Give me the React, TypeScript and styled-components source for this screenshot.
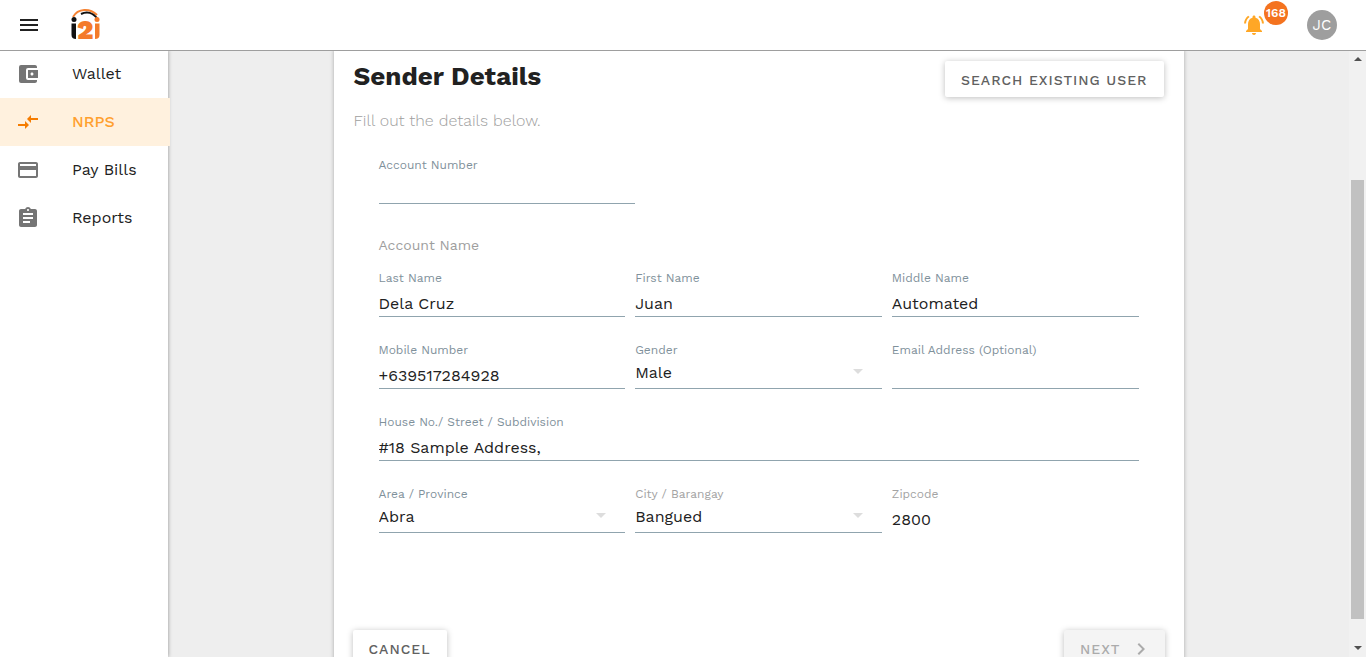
import React from "react";
import styled, { createGlobalStyle, css } from "styled-components";
import {
  MdAccountBalanceWallet,
  MdAssignment,
  MdChevronRight,
  MdCompareArrows,
  MdMenu,
  MdNotificationsActive,
  MdPayment,
} from "react-icons/md";

const GlobalStyle = createGlobalStyle`
  *, *::before, *::after { box-sizing: border-box; }
  body {
    margin: 0;
    background: #eeeeee;
    color: #212121;
    font-family: "Work Sans", Inter, "Liberation Sans", sans-serif;
    font-size: 16px;
  }
  button, input, select { font: inherit; color: inherit; letter-spacing: inherit; }
`;

const Shell = styled.div`
  display: flex;
  flex-direction: column;
  height: 100vh;
`;

const TopBar = styled.header`
  position: relative;
  z-index: 2;
  flex: none;
  display: flex;
  align-items: center;
  height: 50px;
  padding: 0 29px 0 17px;
  background: #ffffff;
  box-shadow: 0 1px 0 #9e9e9e;
`;

const IconButton = styled.button`
  position: relative;
  display: flex;
  padding: 0;
  border: 0;
  background: none;
  font-size: 24px;
  cursor: pointer;
`;

const LogoLink = styled.a`
  display: flex;
  margin: 0 auto 0 29px;
`;

const AlertButton = styled(IconButton)`
  margin-right: 41px;
  color: #ffa726;
`;

const Badge = styled.span`
  position: absolute;
  top: -12px;
  left: 22px;
  width: 24px;
  height: 24px;
  border-radius: 50%;
  background: #f4731f;
  color: #ffffff;
  font-size: 12px;
  font-weight: 600;
  line-height: 25px;
  text-align: center;
`;

const Avatar = styled.button`
  width: 30px;
  height: 30px;
  padding: 0;
  border: 0;
  border-radius: 50%;
  background: #9e9e9e;
  color: #ffffff;
  font-size: 15px;
`;

const Body = styled.div`
  flex: 1;
  display: flex;
  min-height: 0;
`;

const Sidebar = styled.nav`
  position: relative;
  z-index: 1;
  flex: none;
  width: 168px;
  background: #ffffff;
  box-shadow: 0 0 4px rgba(0, 0, 0, 0.4);
`;

const NavItem = styled.a<{ $active?: boolean }>`
  display: flex;
  align-items: center;
  gap: 32px;
  height: 48px;
  margin-right: -2px;
  padding-left: 16px;
  color: #212121;
  line-height: 20px;
  text-decoration: none;

  svg {
    color: #757575;
    font-size: 24px;
  }

  ${({ $active }) =>
    $active &&
    css`
      background: #fff1de;
      color: #ffa02e;
      font-weight: 500;
      svg {
        color: #f57c00;
      }
    `}
`;

const Main = styled.main`
  flex: 1;
  min-width: 0;
  overflow-y: auto;
  scrollbar-width: none;
`;

const Card = styled.section`
  max-width: 850px;
  margin: 0 auto;
  padding: 11px 20px 20px;
  background: #ffffff;
  box-shadow: 0 0 4px rgba(0, 0, 0, 0.3);
`;

const CardHead = styled.div`
  display: flex;
  justify-content: space-between;
  align-items: flex-start;
`;

const Title = styled.h1`
  margin: 0;
  font-size: 26px;
  font-weight: 700;
  line-height: 30px;
`;

const Subtitle = styled.p`
  margin: 14px 0 26px;
  color: #9e9e9e;
  font-weight: 300;
  line-height: 20px;
`;

const Action = styled.button`
  display: flex;
  align-items: center;
  gap: 8px;
  height: 36px;
  padding: 2px 16px 0;
  border: 0;
  border-radius: 2px;
  background: #ffffff;
  box-shadow: 0 1px 6px rgba(0, 0, 0, 0.26);
  color: #616161;
  font-size: 14px;
  font-weight: 500;
  letter-spacing: 1px;
  text-transform: uppercase;
  cursor: pointer;

  svg {
    margin-right: -4px;
    font-size: 24px;
  }

  &:disabled {
    background: #f4f4f4;
    color: #ababab;
    cursor: default;
  }
`;

const Form = styled.form`
  padding: 0 25px;
`;

const Legend = styled.h2`
  margin: 31px 0 15px;
  color: #9e9e9e;
  font-size: 14px;
  font-weight: 400;
  line-height: 20px;
`;

const FieldGrid = styled.div`
  display: grid;
  grid-template-columns: repeat(3, 1fr);
  gap: 25px 10px;
`;

const Field = styled.div<{ $wide?: boolean }>`
  position: relative;
  grid-column: ${({ $wide }) => ($wide ? "1 / -1" : "auto")};
`;

const AccountField = styled(Field)`
  max-width: 256px;
`;

const Label = styled.label<{ $muted?: boolean }>`
  display: block;
  color: ${({ $muted }) => ($muted ? "#a3a3a3" : "#7f919b")};
  font-size: 12px;
  line-height: 16px;
`;

const control = css`
  display: block;
  width: 100%;
  height: 31px;
  border: 0;
  border-bottom: 1px solid #90a4ae;
  border-radius: 0;
  outline: 0;
  background: transparent;
`;

const Input = styled.input`
  ${control}
  padding: 5px 0 0;

  &:read-only {
    border-color: transparent;
  }
`;

const Select = styled.select`
  ${control}
  padding: 0 34px 2px 0;
  appearance: none;
`;

const Caret = styled.svg`
  position: absolute;
  right: 19px;
  bottom: 15px;
  fill: #dddddd;
  pointer-events: none;
`;

const Footer = styled.footer`
  display: flex;
  justify-content: space-between;
  margin: 97px -1px 0;
`;

const ScrollBar = styled.div`
  flex: none;
  display: flex;
  flex-direction: column;
  align-items: center;
  width: 17px;
  padding: 6px 0;
  background: #f1f1f1;

  svg {
    fill: #505050;
  }
`;

const Track = styled.div`
  flex: 1;
  width: 13px;
  margin: 6px 0;
  display: grid;
  grid-template-rows: 113fr 439fr 21fr;
`;

const Thumb = styled.div`
  grid-row: 2;
  background: #c1c1c1;
`;

function Logo() {
  return (
    <svg width="32" height="44" viewBox="0 -7 32 44" role="img" aria-label="i2i">
      <path d="M3 7C8 -2 20 -2 27 5" fill="none" stroke="#f58232" strokeWidth="2" />
      <path d="M11 4C17 1 23 3 27 8" fill="none" stroke="#111" strokeWidth="2" />
      <circle cx="4" cy="9.500" r="2.500" fill="#111" />
      <path d="M1.500 13.500H6V29Q1.500 29 1.500 25Z" fill="#111" />
      <text x="7" y="29" fontSize="27" fontWeight="900" fill="#f47b2a">2</text>
      <circle cx="27" cy="9.500" r="2.500" fill="#f47b2a" />
      <path d="M25 13.500H29.500V25Q29.500 29 25 29Z" fill="#f47b2a" />
    </svg>
  );
}

type FieldProps = { id: string; label: string; value?: string; wide?: boolean; muted?: boolean; readOnly?: boolean };

function TextField({ id, label, value = "", wide, muted, readOnly }: FieldProps) {
  return (
    <Field $wide={wide}>
      <Label htmlFor={id} $muted={muted}>{label}</Label>
      <Input id={id} defaultValue={value} readOnly={readOnly} />
    </Field>
  );
}

function SelectField({ id, label, options, muted }: { id: string; label: string; options: string[]; muted?: boolean }) {
  return (
    <Field>
      <Label htmlFor={id} $muted={muted}>{label}</Label>
      <Select id={id}>
        {options.map((option) => <option key={option}>{option}</option>)}
      </Select>
      <Caret width="10" height="5" viewBox="0 0 10 5"><path d="M0 0h10L5 5z" /></Caret>
    </Field>
  );
}

const navItems = [
  { label: "Wallet", icon: <MdAccountBalanceWallet /> },
  { label: "NRPS", icon: <MdCompareArrows />, active: true },
  { label: "Pay Bills", icon: <MdPayment /> },
  { label: "Reports", icon: <MdAssignment /> },
];

export default function App() {
  return (
    <Shell>
      <GlobalStyle />
      <TopBar>
        <IconButton aria-label="Menu"><MdMenu /></IconButton>
        <LogoLink href="#"><Logo /></LogoLink>
        <AlertButton aria-label="Notifications">
          <MdNotificationsActive />
          <Badge>168</Badge>
        </AlertButton>
        <Avatar>JC</Avatar>
      </TopBar>
      <Body>
        <Sidebar>
          {navItems.map(({ label, icon, active }) => (
            <NavItem key={label} href="#" $active={active}>{icon}{label}</NavItem>
          ))}
        </Sidebar>
        <Main>
          <Card>
            <CardHead>
              <Title>Sender Details</Title>
              <Action type="button">Search existing user</Action>
            </CardHead>
            <Subtitle>Fill out the details below.</Subtitle>
            <Form id="sender">
              <AccountField>
                <Label htmlFor="account">Account Number</Label>
                <Input id="account" />
              </AccountField>
              <Legend>Account Name</Legend>
              <FieldGrid>
                <TextField id="last" label="Last Name" value="Dela Cruz" />
                <TextField id="first" label="First Name" value="Juan" />
                <TextField id="middle" label="Middle Name" value="Automated" />
                <TextField id="mobile" label="Mobile Number" value="+639517284928" />
                <SelectField id="gender" label="Gender" options={["Male", "Female"]} />
                <TextField id="email" label="Email Address (Optional)" />
                <TextField id="street" label="House No./ Street / Subdivision" value="#18 Sample Address," wide />
                <SelectField id="province" label="Area / Province" options={["Abra"]} />
                <SelectField id="city" label="City / Barangay" options={["Bangued"]} muted />
                <TextField id="zip" label="Zipcode" value="2800" muted readOnly />
              </FieldGrid>
            </Form>
            <Footer>
              <Action type="button">Cancel</Action>
              <Action type="submit" form="sender" disabled>Next<MdChevronRight /></Action>
            </Footer>
          </Card>
        </Main>
        <ScrollBar aria-hidden="true">
          <svg width="8" height="5" viewBox="0 0 8 5"><path d="M0 5h8L4 1z" /></svg>
          <Track><Thumb /></Track>
          <svg width="8" height="5" viewBox="0 0 8 5"><path d="M0 0h8L4 4z" /></svg>
        </ScrollBar>
      </Body>
    </Shell>
  );
}
